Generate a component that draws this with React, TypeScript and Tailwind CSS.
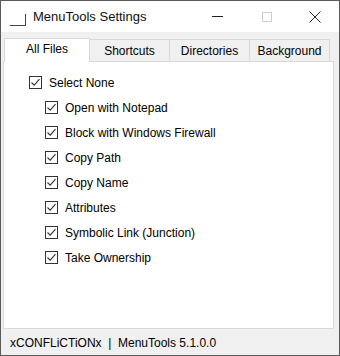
import { useState } from "react";

const ITEMS = [
  "Open with Notepad",
  "Block with Windows Firewall",
  "Copy Path",
  "Copy Name",
  "Attributes",
  "Symbolic Link (Junction)",
  "Take Ownership",
];

const TABS = ["All Files", "Shortcuts", "Directories", "Background"];

const Check = ({ checked }: { checked: boolean }) => (
  <span className="w-[13px] h-[13px] border border-[#333333] bg-white flex items-center justify-center shrink-0">
    {checked && (
      <svg width="11" height="11" viewBox="0 0 11 11">
        <path d="M1.5 5.5 L4.2 8.2 L9.5 2.2" fill="none" stroke="#333333" strokeWidth="1.1" />
      </svg>
    )}
  </span>
);

export default function App() {
  const [checked, setChecked] = useState(ITEMS.map(() => true));
  const all = checked.every(Boolean);

  return (
    <div
      className="w-[340px] h-[356px] flex flex-col bg-[#f0f0f0] border border-[#5a5a5a] text-[#000] select-none"
      style={{ fontFamily: '"Liberation Sans", Arial, sans-serif' }}
    >
      {/* title bar */}
      <div className="h-[31px] bg-white flex items-center shrink-0">
        <div className="w-[16px] h-[12px] ml-[9px] mt-[6px] border-r border-b border-[#444]" />
        <span className="ml-[7px] text-[13px] text-[#111]">MenuTools Settings</span>
        <div className="ml-auto flex items-center h-full">
          <div className="w-[49px] h-full flex items-center justify-center">
            <span className="w-[11px] h-px bg-[#222]" />
          </div>
          <div className="w-[49px] h-full flex items-center justify-center">
            <span className="w-[10px] h-[10px] border border-[#cfcfcf]" />
          </div>
          <div className="w-[48px] h-full flex items-center justify-center">
            <svg width="12" height="12" viewBox="0 0 12 12">
              <path d="M0.5 0.5 L11.5 11.5 M11.5 0.5 L0.5 11.5" stroke="#222" strokeWidth="1" />
            </svg>
          </div>
        </div>
      </div>

      {/* tabs */}
      <div className="flex-1 flex flex-col px-[2px] pt-[5px] pb-[2px]">
        <div className="flex items-end h-[24px] pl-[1px]">
          {TABS.map((t, i) =>
            i === 0 ? (
              <div
                key={t}
                className="w-[86px] h-[24px] bg-white border border-b-0 border-[#d9d9d9] flex items-center justify-center text-[12px] relative z-10 -mb-px pb-[3px]"
              >
                {t}
              </div>
            ) : (
              <div
                key={t}
                className="w-[80px] h-[22px] bg-[#f0f0f0] border border-l-0 border-b-0 border-[#d9d9d9] flex items-center justify-center text-[12px]"
              >
                {t}
              </div>
            )
          )}
        </div>
        <div className="flex-1 bg-white border border-[#d9d9d9] mr-[3px] pt-[8px] pl-[25px]">
          <label
            className="flex items-center gap-[7px] h-[25px] text-[12px]"
            onClick={() => setChecked(ITEMS.map(() => !all))}
          >
            <Check checked={all} />
            <span>{all ? "Select None" : "Select All"}</span>
          </label>
          <div className="pl-[16px]">
            {ITEMS.map((it, i) => (
              <label
                key={it}
                className="flex items-center gap-[7px] h-[25px] text-[12px]"
                onClick={() => setChecked((c) => c.map((v, j) => (j === i ? !v : v)))}
              >
                <Check checked={checked[i]} />
                <span>{it}</span>
              </label>
            ))}
          </div>
        </div>
      </div>

      {/* status bar */}
      <div className="h-[24px] flex items-center px-[9px] text-[12px] shrink-0 pb-[1px]">
        xCONFLiCTiONx&nbsp;&nbsp;|&nbsp;&nbsp;MenuTools 5.1.0.0
      </div>
    </div>
  );
}
